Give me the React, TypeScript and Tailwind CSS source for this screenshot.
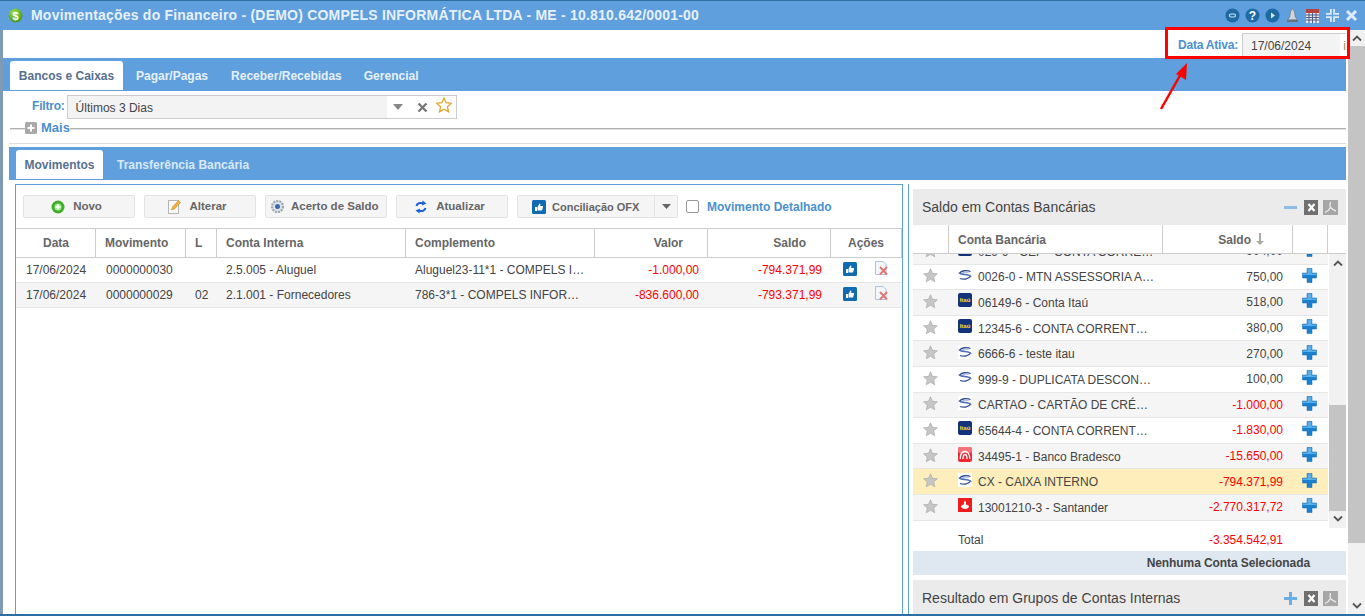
import React from "react";

function MoneyIcon() {
  return (
    <svg width="15" height="15" viewBox="0 0 15 15">
      <defs>
        <radialGradient id="mg" cx="40%" cy="30%" r="80%">
          <stop offset="0" stopColor="#a5e05a" />
          <stop offset="1" stopColor="#2f8f14" />
        </radialGradient>
      </defs>
      <circle cx="7.5" cy="7.5" r="7" fill="url(#mg)" />
      <text x="7.5" y="11.5" textAnchor="middle" fontSize="11" fontWeight="700" fill="#fff" fontFamily="Liberation Sans">$</text>
    </svg>
  );
}

function TitleIcons() {
  return (
    <div className="flex items-center gap-[5px] mr-[7px]">
      <svg width="15" height="15" viewBox="0 0 15 15"><circle cx="7.500" cy="7.500" r="7" fill="#1d6aa5" /><rect x="4.500" y="6" width="6" height="3" rx="1.500" fill="none" stroke="#cfe3f3" strokeWidth="1.200" /></svg>
      <svg width="15" height="15" viewBox="0 0 15 15"><circle cx="7.500" cy="7.500" r="7" fill="#1d6aa5" /><text x="7.500" y="12" textAnchor="middle" fontSize="12" fontWeight="700" fill="#fff" fontFamily="Liberation Sans">?</text></svg>
      <svg width="15" height="15" viewBox="0 0 15 15"><circle cx="7.500" cy="7.500" r="7" fill="#1d6aa5" /><path d="M6 4.500l4 3-4 3z" fill="#d8e8f5" /></svg>
      <svg width="15" height="15" viewBox="0 0 15 15"><path d="M7.500 1c.8 0 1.100.6 1.100 1.300C9.700 3 9.800 6 10.300 9l2.200 2.800h-10L4.700 9C5.200 6 5.300 3 6.400 2.300 6.400 1.600 6.700 1 7.500 1z" fill="#cdd6de" stroke="#66727d" strokeWidth=".7" /><rect x="2" y="12" width="11" height="2" fill="#66727d" /></svg>
      <svg width="15" height="15" viewBox="0 0 15 15"><rect x="1" y="1" width="13" height="14" fill="#e8e8ee" /><rect x="1" y="1" width="13" height="4" fill="#b5413c" /><path d="M1 7h13M1 9.500h13M1 12h13M4 5v10M7.500 5v10M11 5v10" stroke="#4c5f85" strokeWidth="1" /></svg>
      <svg width="15" height="15" viewBox="0 0 15 15" fill="#dcebf8"><path d="M5 1v4H1v1.800h5.800V1zM8.200 1v5.800H14V5h-4V1zM1 8.200V10h4v4h1.800V8.200zM8.200 8.200V14H10v-4h4V8.200z" /></svg>
      <svg width="13" height="13" viewBox="0 0 13 13"><path d="M2 2l9 9M11 2l-9 9" stroke="#dcebf8" strokeWidth="3" /></svg>
    </div>
  );
}

function GrayStar({ size = 15 }: { size?: number }) {
  return (
    <svg width={size} height={size} viewBox="0 0 15 15">
      <path d="M7.500.8l2 4.500 4.900.5-3.700 3.200 1.100 4.800-4.300-2.500-4.300 2.500 1.100-4.800L.6 5.800l4.900-.5z" fill="#c6c6c6" stroke="#a3a3a3" strokeWidth=".6" />
    </svg>
  );
}

function PlusBlue() {
  return (
    <svg width="15" height="15" viewBox="0 0 15 15">
      <path d="M5 .5h5V5h4.500v5H10v4.500H5V10H.5V5H5z" fill="#1b81cf" stroke="#1367ac" strokeWidth=".5" />
      <path d="M5.500 1h4v4.500h4.500V7H1V5.500h4.500z" fill="#5cb0ea" />
    </svg>
  );
}

function ThumbIcon() {
  return (
    <svg width="14" height="14" viewBox="0 0 14 14">
      <rect width="14" height="14" rx="1.500" fill="#0f6cb0" />
      <path d="M3 7h2v4H3zM5.500 7l2-3.500c.8 0 1 .6.8 1.500l-.2 1h2.400c.5 0 .7.500.5 1l-.8 3c-.1.400-.4.500-.8.500H5.500z" fill="#fff" />
    </svg>
  );
}

function DocDelete() {
  return (
    <svg width="15" height="15" viewBox="0 0 15 15">
      <path d="M1.500.5H9l3 3v10H1.500z" fill="#f3f7fc" stroke="#a9c4e4" />
      <path d="M6 6l7 7.500M13 6l-7 7.500" stroke="#e07a76" strokeWidth="2" />
    </svg>
  );
}

function SwooshLogo() {
  return (
    <svg width="14" height="14" viewBox="0 0 14 14" className="bg-white">
      <path d="M1.500 5.500C3 2.500 9 1.800 12.500 3.500M12.500 8C11 11 6 12 2 10.500" fill="none" stroke="#2b4c95" strokeWidth="1.300" />
      <path d="M1 4.500c.5 2.500 9 1.500 11.500 3.500.3.300.3.600 0 1" fill="none" stroke="#4a6cb5" strokeWidth="1.500" />
      <path d="M3.500 6C3.500 4.500 7 3.800 10.500 4.500" fill="none" stroke="#7f99cc" strokeWidth=".8" />
    </svg>
  );
}

function ItauLogo() {
  return (
    <div className="w-[14px] h-[14px] rounded-[2px] bg-[#12337c] flex items-center justify-center text-[6px] leading-none font-bold text-[#f5e020] overflow-hidden">
      Itaú
    </div>
  );
}

function BradescoLogo() {
  return (
    <svg width="14" height="15" viewBox="0 0 14 15">
      <rect width="14" height="15" rx="2" fill="#ec2a33" />
      <rect width="14" height="6" rx="2" fill="#f4747a" />
      <path d="M2.200 12C2.200 7 4.500 4.500 7 4.500s4.800 2.500 4.800 7.500M5 12c0-3 .8-4.500 2-4.500S9 9 9 12" fill="none" stroke="#fff" strokeWidth="1.300" />
    </svg>
  );
}

function SantanderLogo() {
  return (
    <svg width="14" height="14" viewBox="0 0 14 14">
      <rect width="14" height="14" fill="#ee1c1c" />
      <path d="M7 2.500c1 1.500 1.500 2.200.8 3.800C9 7 10 7.200 11 8c0 2-2 3-4 3s-4-1-4-3c1-.8 1.800-1 3-1.700C5.500 5 6 4 7 2.500z" fill="#fff" />
    </svg>
  );
}

function Xls() {
  return (
    <div className="w-[14px] h-[15px] bg-[#707070] flex items-center justify-center">
      <svg width="9" height="9" viewBox="0 0 9 9"><path d="M1.500 1l6 7M7.500 1l-6 7" stroke="#fff" strokeWidth="2.200" /></svg>
    </div>
  );
}

function Pdf() {
  return (
    <div className="w-[15px] h-[15px] bg-[#a6a6a6] flex items-center justify-center">
      <svg width="13" height="13" viewBox="0 0 13 13" fill="none"><path d="M6.500 1c-.8 2.500-.8 4 0 5.500M6.500 6.500C5.500 8.500 3.500 10.500 1 11.500M6.500 6.500c1.500 1.500 3.500 3 5.500 3.500" stroke="#ececec" strokeWidth="1.300" /></svg>
    </div>
  );
}

function Chevron({ down = false }: { down?: boolean }) {
  return (
    <svg width="10" height="7" viewBox="0 0 10 7" fill="none">
      <path d={down ? "M1 1.500l4 4 4-4" : "M1 5.500l4-4 4 4"} stroke="#555" strokeWidth="1.800" />
    </svg>
  );
}

function ToolButton({ w, icon, label }: { w: string; icon: React.ReactNode; label: string }) {
  return (
    <div className={`${w} h-[23px] border border-[#e3e3e3] rounded-[2px] bg-[#f5f5f5] flex items-center justify-center gap-[8px] pr-[5px] text-[11.500px] font-bold text-[#666]`}>
      {icon}
      <span className="pt-[1px]">{label}</span>
    </div>
  );
}

const COLS = "grid-cols-[80px_90px_31px_189px_189px_113px_123px_71px]";

function HeadCell({ children, className = "" }: { children?: React.ReactNode; className?: string }) {
  return <div className={`border-r border-[#ccc] flex items-center h-full ${className}`}>{children}</div>;
}

function MoveRow({ d, m, l, c, comp, v, s, alt }: { d: string; m: string; l: string; c: string; comp: string; v: string; s: string; alt?: boolean }) {
  return (
    <div className={`grid ${COLS} h-[25px] items-center text-[12px] text-[#444] border-b border-[#e6e6e6] ${alt ? "bg-[#f5f5f5]" : "bg-white"}`}>
      <div className="pl-[10px]">{d}</div>
      <div className="pl-[10px]">{m}</div>
      <div className="pl-[9px]">{l}</div>
      <div className="pl-[9px]">{c}</div>
      <div className="pl-[9px] pr-[9px] truncate">{comp}</div>
      <div className="text-right pr-[9px] text-[#f00]">{v}</div>
      <div className="text-right pr-[9px] text-[#f00]">{s}</div>
      <div className="flex items-center pl-[12px] gap-[17px] -mt-[3px]">
        <ThumbIcon />
        <DocDelete />
      </div>
    </div>
  );
}

type Acc = { logo: React.ReactNode; name: string; val: string; red?: boolean; hi?: boolean; alt?: boolean };

const ACCOUNTS: Acc[] = [
  { logo: <ItauLogo />, name: "029-9 - CEF - CONTA CORRENTE", val: "904,00", alt: true },
  { logo: <SwooshLogo />, name: "0026-0 - MTN ASSESSORIA ADMINIST", val: "750,00" },
  { logo: <ItauLogo />, name: "06149-6 - Conta Itaú", val: "518,00", alt: true },
  { logo: <ItauLogo />, name: "12345-6 - CONTA CORRENTE ITAU", val: "380,00" },
  { logo: <SwooshLogo />, name: "6666-6 - teste itau", val: "270,00", alt: true },
  { logo: <SwooshLogo />, name: "999-9 - DUPLICATA DESCONTADA", val: "100,00" },
  { logo: <SwooshLogo />, name: "CARTAO - CARTÃO DE CRÉDITO", val: "-1.000,00", red: true, alt: true },
  { logo: <ItauLogo />, name: "65644-4 - CONTA CORRENTE ITAU", val: "-1.830,00", red: true },
  { logo: <BradescoLogo />, name: "34495-1 - Banco Bradesco", val: "-15.650,00", red: true, alt: true },
  { logo: <SwooshLogo />, name: "CX - CAIXA INTERNO", val: "-794.371,99", red: true, hi: true },
  { logo: <SantanderLogo />, name: "13001210-3 - Santander", val: "-2.770.317,72", red: true, alt: true },
];

function AccountRow({ a }: { a: Acc }) {
  const bg = a.hi ? "bg-[#fdeebb]" : a.alt ? "bg-[#f5f5f5]" : "bg-white";
  return (
    <div className={`h-[25.600px] shrink-0 flex items-center border-b border-[#e6e6e6] text-[12px] text-[#444] ${bg}`}>
      <div className="w-[45px] pl-[10px] shrink-0 -mt-[2px]"><GrayStar /></div>
      <div className="w-[20px] shrink-0 -mt-[4px]">{a.logo}</div>
      <div className="w-[177px] shrink-0 truncate pt-[1px]">{a.name}</div>
      <div className={`w-[128px] shrink-0 text-right ${a.red ? "text-[#f00]" : ""}`}>{a.val}</div>
      <div className="pl-[19px] -mt-[3px]"><PlusBlue /></div>
    </div>
  );
}

export default function App() {
  return (
    <div className="relative w-[1365px] h-[616px] overflow-hidden bg-white font-['Liberation_Sans',Arial,sans-serif] flex flex-col">
      <div className="h-[30px] shrink-0 border-t border-[#2f6f9f] bg-[#5f9fdd] flex items-center justify-between pl-[8px]">
        <div className="flex items-center gap-[8px]">
          <MoneyIcon />
          <span className="text-[14px] font-bold text-[#e6f0fa] tracking-[0.210px]">Movimentações do Financeiro - (DEMO) COMPELS INFORMÁTICA LTDA - ME - 10.810.642/0001-00</span>
        </div>
        <TitleIcons />
      </div>

      <div className="flex flex-1 min-h-0">
        <div className="w-[3px] shrink-0 bg-[#7f9ab5]" />
        <div className="w-[1343px] shrink-0 flex flex-col min-h-0">
          <div className="h-[28px] shrink-0 flex items-start justify-end">
            <span className="text-[12px] font-bold text-[#4a90d0] mt-[8px] mr-[4px] tracking-[-0.200px] leading-[14px]">Data Ativa:</span>
            <div className="mt-[3px] w-[104px] h-[25px] flex border border-[#ccc] border-r-0 bg-white">
              <div className="w-[97px] bg-[#f3f3f3] pl-[8px] text-[12px] leading-[24px] text-[#444]">17/06/2024</div>
              <div className="flex-1 text-[12px] leading-[24px] text-[#b9814a] text-right">i</div>
            </div>
          </div>

          <div className="h-[33px] shrink-0 bg-[#5f9fdd] flex items-end pl-[7px] text-[12px] font-bold text-[#e6f0fa]">
            <div className="h-[29px] mb-[1px] w-[113px] bg-white rounded-t-[3px] text-[#56708f] flex items-center justify-center">Bancos e Caixas</div>
            <div className="h-[29px] mb-[1px] flex items-center ml-[13px]">Pagar/Pagas</div>
            <div className="h-[29px] mb-[1px] flex items-center ml-[23px]">Receber/Recebidas</div>
            <div className="h-[29px] mb-[1px] flex items-center ml-[22px]">Gerencial</div>
          </div>

          <div className="h-[28px] shrink-0 flex items-end pl-[29px]">
            <span className="text-[12px] font-bold text-[#4a90d0] mb-[4px] mr-[2px] tracking-[-0.200px]">Filtro:</span>
            <div className="w-[390px] h-[24px] border border-[#ccc] flex items-center text-[12px] text-[#444]">
              <div className="w-[319px] h-full bg-[#f3f3f3] pl-[8px] leading-[24px]">Últimos 3 Dias</div>
              <svg width="10" height="6" viewBox="0 0 10 6" className="ml-[6px]"><path d="M0 0h10L5 6z" fill="#888" /></svg>
              <svg width="11" height="11" viewBox="0 0 11 11" className="ml-[14px]"><path d="M1.500 1.500l8 8M9.500 1.500l-8 8" stroke="#777" strokeWidth="2.400" /></svg>
              <svg width="16" height="16" viewBox="0 0 15 15" className="ml-[8px] -mt-[5px]"><path d="M7.500 1l2 4.400 4.800.6-3.600 3.200 1 4.700-4.200-2.400-4.200 2.400 1-4.700L.7 6l4.800-.6z" fill="#fff" stroke="#e5a52a" strokeWidth="1.200" /></svg>
            </div>
          </div>

          <div className="h-[24px] shrink-0 pl-[7px] flex items-start">
            <div className="relative w-full mt-[9px] h-[2px] bg-[#e3e3e3] border-t border-[#b0b0b0]">
              <div className="absolute left-[15px] -top-[9px] flex items-center gap-[4px] bg-white">
                <svg width="12" height="12" viewBox="0 0 12 12"><rect width="12" height="12" rx="1.500" fill="#a8a8a8" /><path d="M6 2.500v7M2.500 6h7" stroke="#fff" strokeWidth="2" /></svg>
                <span className="text-[13px] font-bold text-[#4a90d0] leading-[16px]">Mais</span>
              </div>
            </div>
          </div>

          <div className="h-[4px] shrink-0 ml-[6px] border-t border-[#e0e0e0]" />

          <div className="h-[33px] shrink-0 ml-[6px] bg-[#5f9fdd] flex items-end pl-[7px] text-[12px] font-bold text-[#d9e8f6]">
            <div className="h-[29px] mb-[1px] w-[87px] bg-white rounded-t-[3px] text-[#56708f] flex items-center justify-center">Movimentos</div>
            <div className="h-[29px] mb-[1px] flex items-center ml-[14px]">Transferência Bancária</div>
          </div>

          <div className="flex-1 min-h-0 flex pl-[12px] pt-[4px] overflow-hidden">
            <div className="w-[888px] shrink-0 border border-b-0 border-[#5f9fdd] flex flex-col">
              <div className="h-[43px] shrink-0 flex items-start pt-[10px] pl-[7px] gap-[9px]">
                <ToolButton w="w-[112px]" label="Novo" icon={
                  <svg width="14" height="14" viewBox="0 0 14 14"><circle cx="7" cy="7" r="6.500" fill="#3fae2a" /><circle cx="7" cy="7" r="3.500" fill="#a5e890" /><path d="M7 4.500v5M4.500 7h5" stroke="#fff" strokeWidth="1.500" /></svg>
                } />
                <ToolButton w="w-[112px]" label="Alterar" icon={
                  <svg width="13" height="15" viewBox="0 0 13 15"><rect x=".5" y="1.500" width="10" height="13" fill="#fafafa" stroke="#b5b5b5" /><path d="M3.500 11l1-3 6-6.500 2 2-6 6.500z" fill="#f2b13c" stroke="#c98a1e" strokeWidth=".6" /></svg>
                } />
                <div className="w-[122px] h-[23px] border border-[#e3e3e3] rounded-[2px] bg-[#f5f5f5] flex items-center pl-[4px] gap-[6px] text-[11.500px] font-bold text-[#666]">
                  <svg width="15" height="15" viewBox="0 0 15 15"><circle cx="7.500" cy="7.500" r="5.500" fill="#dfe5ec" stroke="#9aa6b4" strokeWidth="2.200" strokeDasharray="2 1" /><circle cx="7.500" cy="7.500" r="2.500" fill="#3f66a8" /></svg>
                  <span className="pt-[1px]">Acerto de Saldo</span>
                </div>
                <ToolButton w="w-[112px]" label="Atualizar" icon={
                  <svg width="14" height="14" viewBox="0 0 14 14" fill="none"><path d="M2.500 6C3 3.500 6 2 9.500 3.500" stroke="#1a63d6" strokeWidth="2" /><path d="M8.500.5l4 3-4.500 2z" fill="#1a63d6" /><path d="M11.500 8C11 10.500 8 12 4.500 10.500" stroke="#1a63d6" strokeWidth="2" /><path d="M5.500 13.500l-4-3 4.500-2z" fill="#1a63d6" /></svg>
                } />
                <div className="w-[161px] h-[23px] border border-[#e3e3e3] rounded-[2px] bg-[#f5f5f5] flex items-center text-[11px] font-bold text-[#666]">
                  <div className="w-[137px] h-full flex items-center pl-[14px] gap-[6px] border-r border-[#e3e3e3]">
                    <ThumbIcon />
                    <span className="pt-[1px]">Conciliação OFX</span>
                  </div>
                  <svg width="9" height="5" viewBox="0 0 9 5" className="ml-[7px]"><path d="M0 0h9L4.500 5z" fill="#666" /></svg>
                </div>
                <div className="flex items-center h-[23px] -ml-[1px]">
                  <div className="w-[13px] h-[13px] border border-[#999] rounded-[2px] bg-white" />
                  <span className="text-[12px] font-bold text-[#4a90d0] ml-[8px]">Movimento Detalhado</span>
                </div>
              </div>

              <div className={`grid ${COLS} h-[30px] shrink-0 items-center border-t border-b border-[#ccc] text-[12px] font-bold text-[#666]`}>
                <HeadCell className="justify-center pl-[1px]">Data</HeadCell>
                <HeadCell className="pl-[9px]">Movimento</HeadCell>
                <HeadCell className="pl-[9px]">L</HeadCell>
                <HeadCell className="pl-[9px]">Conta Interna</HeadCell>
                <HeadCell className="pl-[9px]">Complemento</HeadCell>
                <HeadCell className="justify-end pr-[24px]">Valor</HeadCell>
                <HeadCell className="justify-end pr-[24px]">Saldo</HeadCell>
                <HeadCell className="justify-center">Ações</HeadCell>
              </div>
              <MoveRow d="17/06/2024" m="0000000030" l="" c="2.5.005 - Aluguel" comp="Aluguel23-11*1 - COMPELS INFORMÁTICA" v="-1.000,00" s="-794.371,99" />
              <MoveRow d="17/06/2024" m="0000000029" l="02" c="2.1.001 - Fornecedores" comp="786-3*1 - COMPELS INFORMÁTICA LTDA" v="-836.600,00" s="-793.371,99" alt />
            </div>

            <div className="w-[438px] shrink-0 ml-[5px] border-l border-[#5f9fdd] pl-[4px] pt-[5px] flex flex-col">
              <div className="h-[36px] shrink-0 bg-[#ebebeb] flex items-center pl-[9px] pr-[8px] text-[14px] text-[#444]">
                <span className="flex-1">Saldo em Contas Bancárias</span>
                <div className="w-[13px] h-[3px] bg-[#8fbce6] mr-[7px]" />
                <div className="mr-[5px]"><Xls /></div>
                <Pdf />
              </div>
              <div className="h-[29px] shrink-0 flex border-b border-[#ccc] text-[12px] font-bold text-[#666]">
                <div className="w-[36px] border-r border-[#ccc]" />
                <div className="w-[214px] border-r border-[#ccc] pl-[9px] pt-[1px] flex items-center">Conta Bancária</div>
                <div className="w-[130px] border-r border-[#ccc] flex items-center justify-end pr-[41px] pt-[1px] relative">
                  Saldo
                  <svg width="8" height="12" viewBox="0 0 8 12" className="absolute right-[28px] top-[8px]"><path d="M3 0h2v8h3l-4 4-4-4h3z" fill="#aaa" /></svg>
                </div>
                <div className="w-[35px] border-r border-[#ccc]" />
              </div>
              <div className="h-[274px] shrink-0 flex overflow-hidden">
                <div className="w-[415px] mr-[1px] shrink-0 overflow-hidden">
                  <div className="-mt-[15px] flex flex-col">
                    {ACCOUNTS.map((a) => <AccountRow key={a.name} a={a} />)}
                  </div>
                </div>
                <div className="w-[17px] shrink-0 bg-[#f1f1f1] flex flex-col items-center justify-between py-[6px] relative">
                  <Chevron />
                  <div className="absolute left-0 top-[151px] w-[17px] h-[106px] bg-[#c4c4c4]" />
                  <Chevron down />
                </div>
              </div>
              <div className="h-[23px] shrink-0 flex items-center text-[12px] text-[#444]">
                <span className="pl-[45px] w-[240px]">Total</span>
                <span className="w-[130px] text-right text-[#f00]">-3.354.542,91</span>
              </div>
              <div className="h-[24px] shrink-0 bg-[#dfe8f1] text-[12px] font-bold text-[#444] flex items-center justify-end pr-[36px] tracking-[-0.080px]">Nenhuma Conta Selecionada</div>
              <div className="h-[36px] mt-[5px] shrink-0 bg-[#ebebeb] flex items-center pl-[9px] pr-[8px] text-[14px] text-[#444]">
                <span className="flex-1">Resultado em Grupos de Contas Internas</span>
                <svg width="13" height="13" viewBox="0 0 13 13" className="mr-[7px]"><path d="M6.500 0v13M0 6.500h13" stroke="#6aaee6" strokeWidth="3" /></svg>
                <div className="mr-[5px]"><Xls /></div>
                <Pdf />
              </div>
            </div>
          </div>
        </div>

        <div className="w-[17px] ml-[2px] shrink-0 bg-[#f1f1f1] flex flex-col items-center justify-between pt-[5px] pb-[7px] relative">
          <Chevron />
          <div className="absolute left-0 top-[16px] w-[17px] h-[497px] bg-[#c4c4c4]" />
          <Chevron down />
        </div>
      </div>

      <div className="absolute left-[1165px] top-[27px] w-[185px] h-[32px] border-[3px] border-[#f00]" />
      <svg className="absolute left-[1155px] top-[60px]" width="40" height="55" viewBox="0 0 40 55">
        <path d="M6 49L27 12" stroke="#f00" strokeWidth="2.500" />
        <path d="M32 3l-1 17-10-6z" fill="#f00" />
      </svg>
      <div className="absolute left-0 right-0 bottom-0 h-[2px] bg-[#2d6ea3]" />
    </div>
  );
}
